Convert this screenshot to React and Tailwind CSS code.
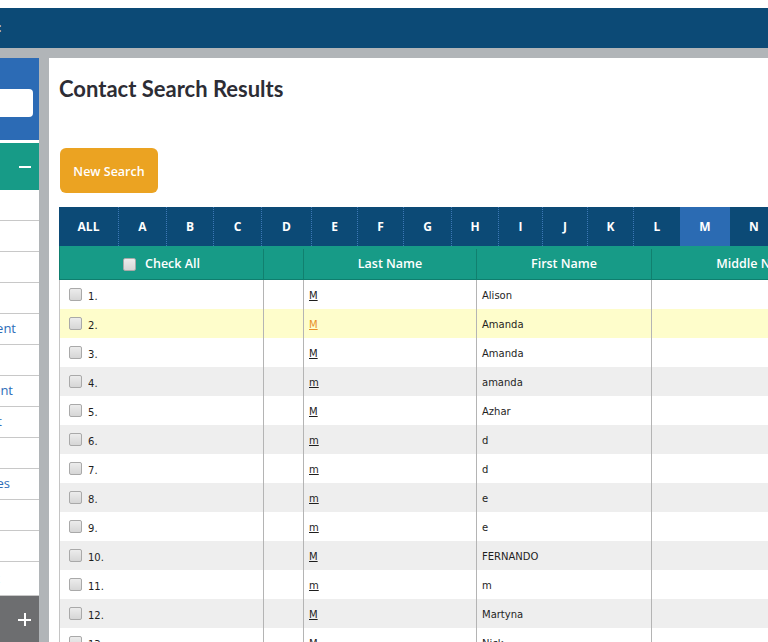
import React from 'react';

const letters = [
   { label: 'ALL', cls: 'w-[59px]' },
   { label: 'A', cls: 'w-[48px] border-l border-dotted border-[#3d78b6]' },
   { label: 'B', cls: 'w-[47px] border-l border-dotted border-[#3d78b6]' },
   { label: 'C', cls: 'w-[48px] border-l border-dotted border-[#3d78b6]' },
   { label: 'D', cls: 'w-[50px] border-l border-dotted border-[#3d78b6]' },
   { label: 'E', cls: 'w-[46px] border-l border-dotted border-[#3d78b6]' },
   { label: 'F', cls: 'w-[46px] border-l border-dotted border-[#3d78b6]' },
   { label: 'G', cls: 'w-[48px] border-l border-dotted border-[#3d78b6]' },
   { label: 'H', cls: 'w-[47px] border-l border-dotted border-[#3d78b6]' },
   { label: 'I', cls: 'w-[44px] border-l border-dotted border-[#3d78b6]' },
   { label: 'J', cls: 'w-[45px] border-l border-dotted border-[#3d78b6]' },
   { label: 'K', cls: 'w-[46px] border-l border-dotted border-[#3d78b6]' },
   { label: 'L', cls: 'w-[47px] border-l border-dotted border-[#3d78b6]' },
   { label: 'M', cls: 'w-[50px] bg-[#2b6bb3]' },
   { label: 'N', cls: 'w-[48px]' },
];

const contacts = [
   ['M', 'Alison'],
   ['M', 'Amanda'],
   ['M', 'Amanda'],
   ['m', 'amanda'],
   ['M', 'Azhar'],
   ['m', 'd'],
   ['m', 'd'],
   ['m', 'e'],
   ['m', 'e'],
   ['M', 'FERNANDO'],
   ['m', 'm'],
   ['M', 'Martyna'],
   ['M', 'Nick'],
];

// sidebar labels are wider than the collapsed column, so they get clipped on the left
const navItems = [
   { label: 'Dashboard', pad: 'pr-[60px]' },
   { label: 'Contacts', pad: 'pr-[60px]' },
   { label: 'Companies', pad: 'pr-[60px]' },
   { label: 'Search', pad: 'pr-[60px]' },
   { label: 'Contact Management', pad: 'pr-[23px]' },
   { label: 'Groups', pad: 'pr-[60px]' },
   { label: 'Add Appointment', pad: 'pr-[26px]' },
   { label: 'Import Contact', pad: 'pr-[37px]' },
   { label: 'Reports', pad: 'pr-[60px]' },
   { label: 'Custom Fields Templates', pad: 'pr-[29px]' },
   { label: 'Settings', pad: 'pr-[60px]' },
   { label: 'Users', pad: 'pr-[60px]' },
   { label: 'Logout', pad: 'pr-[60px] h-[34px]' },
];

const Checkbox = () => (
   <span className="inline-block h-[13px] w-[13px] shrink-0 rounded-[2px] border border-[#a9a9a9] bg-gradient-to-b from-[#ececec] to-[#d6d6d6]" />
);

const App = () => {
   return (
      <div className="flex h-[642px] w-[768px] flex-col overflow-hidden bg-white font-['Open_Sans',sans-serif]">
         <div className="h-2 shrink-0 bg-white" />
         <div className="flex h-10 shrink-0 items-center bg-[#0c4a76]">
            <span className="-ml-[2px] text-[12px] font-bold leading-none text-[#c9d7e4]">:</span>
         </div>

         <div className="flex min-h-0 flex-1 gap-[10px] bg-[#b1b5b8] pt-[10px]">
            {/* Sidebar (collapsed) */}
            <aside className="flex w-[39px] shrink-0 flex-col overflow-hidden bg-white">
               <div className="flex h-[82px] shrink-0 items-center bg-[#2c6bb5]">
                  <div className="mt-[8px] h-[28px] w-[33px] rounded-r-[4px] bg-white" />
               </div>
               <div className="h-[3px] shrink-0 bg-white" />
               <div className="flex h-[47px] shrink-0 items-center justify-end bg-[#179b87] pr-[8px]">
                  <span className="h-[2px] w-[12px] bg-white" />
               </div>
               {navItems.map((item, i) => (
                  <div
                     key={i}
                     className={`flex h-[31px] shrink-0 items-center justify-end overflow-hidden whitespace-nowrap border-b border-[#c8c8c8] text-[13px] text-[#2d6db8] ${item.pad}`}
                  >
                     {item.label}
                  </div>
               ))}
               <div className="flex flex-1 items-center justify-end bg-[#6d6e70] pr-[8px] pt-[1px]">
                  <span className="relative h-[13px] w-[13px]">
                     <span className="absolute left-0 top-[5.5px] h-[2px] w-[13px] bg-white" />
                     <span className="absolute left-[5.5px] top-0 h-[13px] w-[2px] bg-white" />
                  </span>
               </div>
            </aside>

            {/* Main panel */}
            <main className="min-w-0 flex-1 overflow-hidden bg-white pl-[10px]">
               <h1 className="mt-[18px] h-[25px] whitespace-nowrap font-['Lato',sans-serif] text-[22px] font-bold leading-[25px] text-[#2d2d35]">
                  Contact Search Results
               </h1>

               <button className="ml-px mt-[47px] h-[45px] w-[98px] rounded-[6px] bg-[#eba322] pt-[3px] text-[12.5px] font-semibold text-white">
                  New Search
               </button>

               <div className="mt-[14px] w-[900px]">
                  {/* Alphabet filter */}
                  <div className="flex h-[39px] bg-[#0c4a76] text-[12px] font-bold text-white">
                     {letters.map(l => (
                        <div key={l.label} className={`flex shrink-0 items-center justify-center ${l.cls}`}>
                           {l.label}
                        </div>
                     ))}
                  </div>

                  {/* Header */}
                  <div className="flex h-[34px] border-b border-l border-[#0f7e6e] bg-[#179b87] pt-[3px] text-[12.5px] font-semibold text-white">
                     <div className="flex w-[204px] shrink-0 items-center justify-center gap-[9px] border-r border-[#11806f]">
                        <Checkbox />
                        <span>Check All</span>
                     </div>
                     <div className="w-[40px] shrink-0 border-r border-[#11806f]" />
                     <div className="flex w-[173px] shrink-0 items-center justify-center border-r border-[#11806f]">Last Name</div>
                     <div className="flex w-[175px] shrink-0 items-center justify-center border-r border-[#11806f]">First Name</div>
                     <div className="flex w-[210px] shrink-0 items-center justify-center border-r border-[#11806f]">Middle Name</div>
                  </div>

                  {/* Rows */}
                  {contacts.map(([last, first], i) => {
                     const bg = i === 1 ? 'bg-[#fefdcb]' : i % 2 === 1 ? 'bg-[#eeeeee]' : 'bg-white';
                     return (
                        <div key={i} className={`flex h-[29px] border-l border-[#c4c4c4] font-['DejaVu_Sans',sans-serif] text-[10px] text-[#1e1e1e] ${bg}`}>
                           <div className="flex w-[204px] shrink-0 items-center gap-[6px] border-r border-[#b4b4b4] pl-[9px]">
                              <Checkbox />
                              <span className="mt-[4px]">{i + 1}.</span>
                           </div>
                           <div className="w-[40px] shrink-0 border-r border-[#b4b4b4]" />
                           <div className="flex w-[173px] shrink-0 items-center border-r border-[#b4b4b4] pl-[5px] pt-[2px]">
                              <span className={`underline ${i === 1 ? 'text-[#e8902a]' : ''}`}>{last}</span>
                           </div>
                           <div className="flex w-[175px] shrink-0 items-center border-r border-[#b4b4b4] pl-[5px] pt-[2px]">{first}</div>
                           <div className="w-[210px] shrink-0 border-r border-[#b4b4b4]" />
                        </div>
                     );
                  })}
               </div>
            </main>
         </div>
      </div>
   );
};

export default App;
